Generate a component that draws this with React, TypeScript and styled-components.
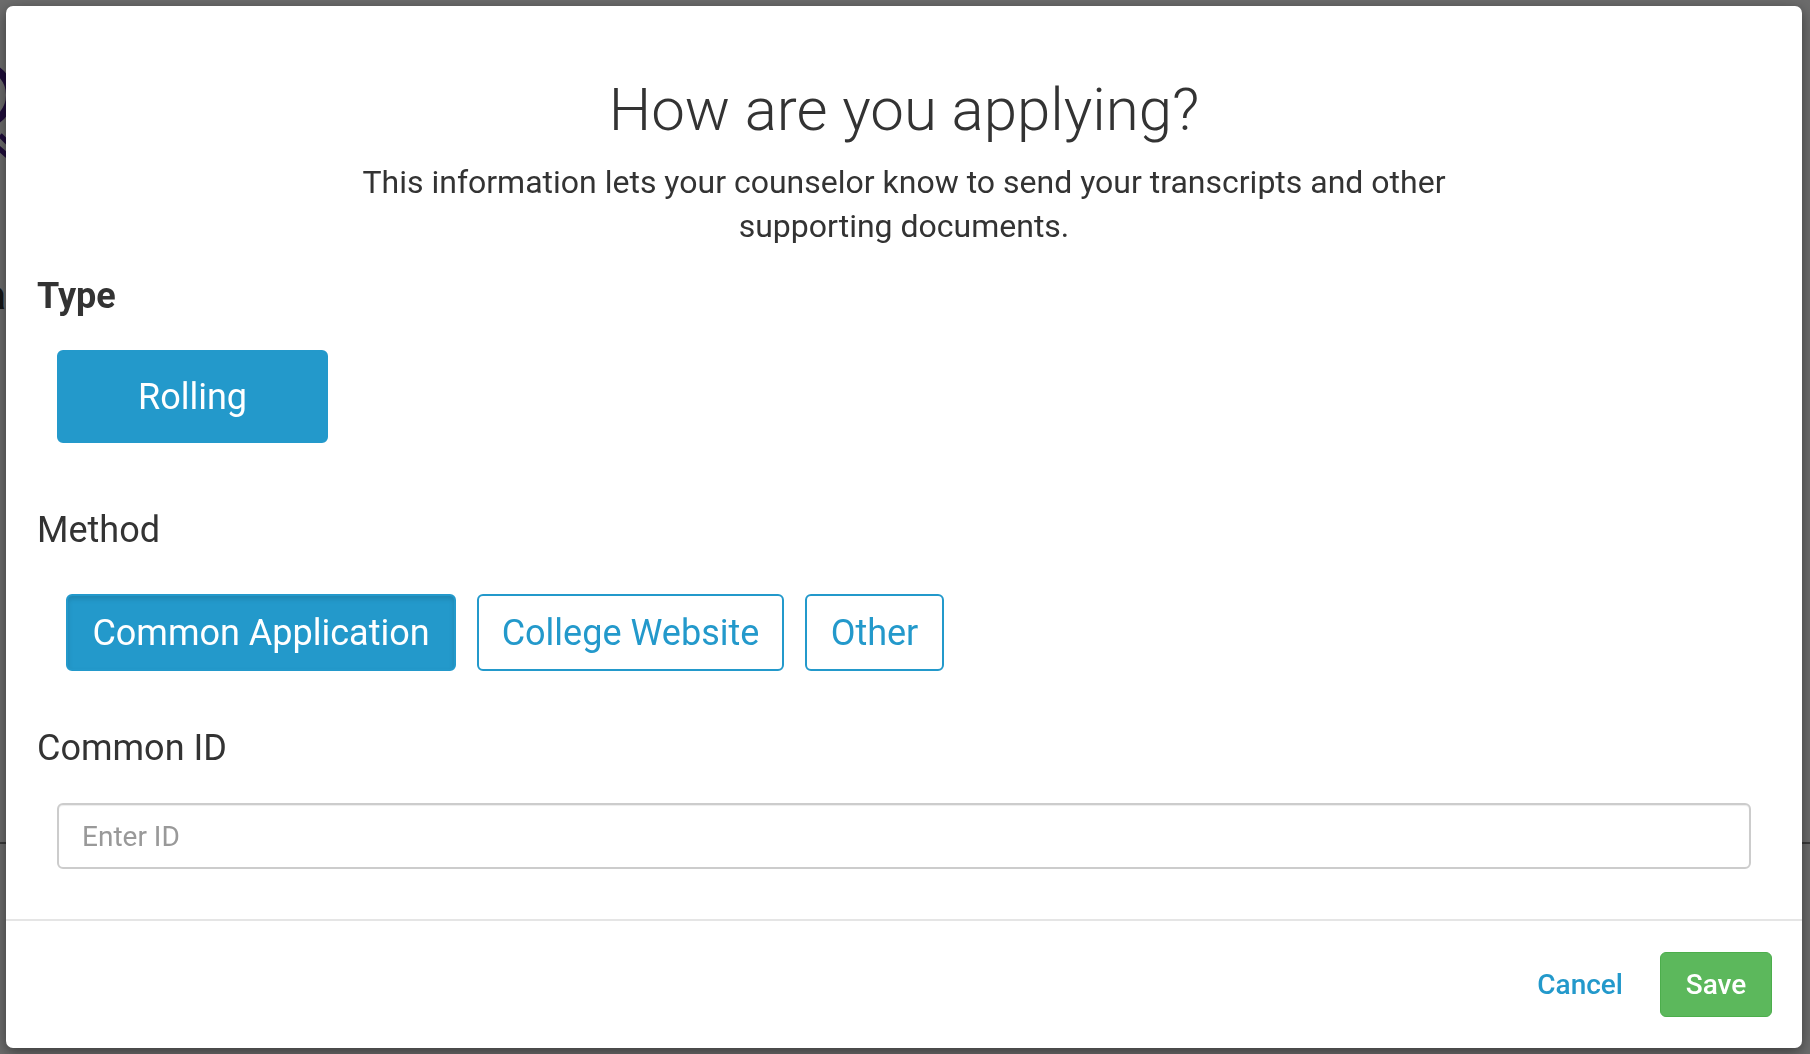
import React from "react";
import styled, { createGlobalStyle } from "styled-components";

const GlobalStyle = createGlobalStyle`
  html, body { margin: 0; padding: 0; height: 100%; }
  body {
    font-family: Roboto, "Noto Sans", "Liberation Sans", sans-serif;
    color: #333;
    background: #fff;
    overflow: hidden;
  }
  * { box-sizing: border-box; }
`;

const BLUE = "#2399cb";

const Page = styled.div`
  position: relative;
  width: 1810px;
  height: 1054px;
  background: #fff;
`;

const PageLogo = styled.svg`
  position: absolute;
  left: -60px;
  top: 50px;
`;

const PageText = styled.span`
  position: absolute;
  left: -16px;
  top: 272px;
  font-size: 40px;
  font-weight: 700;
  color: #333;
`;

const PageRule = styled.div`
  position: absolute;
  left: 0;
  right: 0;
  top: 842px;
  height: 2px;
  background: #888;
`;

const Overlay = styled.div`
  position: fixed;
  inset: 0;
  background: rgba(0, 0, 0, 0.58);
  display: flex;
  padding: 6px 8px 6px 6px;
`;

const Modal = styled.div`
  flex: 1;
  background: #fff;
  border-radius: 7px;
  box-shadow: 0 4px 14px rgba(0, 0, 0, 0.45);
  display: flex;
  flex-direction: column;
`;

const Body = styled.div`
  flex: 1;
  padding: 71px 31px 0 31px;
  display: flex;
  flex-direction: column;
`;

const Title = styled.h1`
  margin: 0;
  text-align: center;
  font-size: 60px;
  line-height: 66px;
  font-weight: 300;
  color: #333;
`;

const Subtitle = styled.p`
  margin: 17px auto 0;
  max-width: 1200px;
  text-align: center;
  font-size: 32px;
  line-height: 44px;
  font-weight: 400;
  color: #333;
`;

const Label = styled.div<{ $bold?: boolean; $gap: number }>`
  margin-top: ${(p) => p.$gap}px;
  font-size: 36px;
  line-height: 40px;
  font-weight: ${(p) => (p.$bold ? 700 : 400)};
  color: #333;
`;

const ButtonRow = styled.div<{ $gap: number; $indent: number }>`
  margin-top: ${(p) => p.$gap}px;
  padding-left: ${(p) => p.$indent}px;
  display: flex;
  gap: 21px;
`;

const Choice = styled.button<{ $active?: boolean; $h: number; $w: number }>`
  height: ${(p) => p.$h}px;
  width: ${(p) => p.$w}px;
  padding: 0;
  border: 2px solid ${BLUE};
  border-radius: 6px;
  background: ${(p) => (p.$active ? BLUE : "#fff")};
  color: ${(p) => (p.$active ? "#fff" : BLUE)};
  font-family: inherit;
  font-size: 36px;
  font-weight: 400;
  cursor: pointer;
`;

const ActiveChoice = styled(Choice)`
  box-shadow: inset 0 3px 5px rgba(0, 0, 0, 0.125);
`;

const Input = styled.input`
  margin: 35px 20px 0 20px;
  height: 66px;
  border: 2px solid #ccc;
  border-radius: 6px;
  padding: 0 23px;
  font-family: inherit;
  font-size: 28px;
  color: #555;
  box-shadow: inset 0 1px 1px rgba(0, 0, 0, 0.075);
  outline: none;
  &::placeholder { color: #999; }
`;

const Footer = styled.div`
  border-top: 2px solid #e5e5e5;
  padding: 31px 30px 31px 0;
  display: flex;
  justify-content: flex-end;
  align-items: center;
  gap: 37px;
`;

const LinkButton = styled.button`
  border: none;
  background: none;
  padding: 0;
  color: ${BLUE};
  font-family: inherit;
  font-size: 28px;
  font-weight: 500;
  cursor: pointer;
`;

const SaveButton = styled.button`
  width: 112px;
  height: 65px;
  border: 1px solid #4cae4c;
  border-radius: 6px;
  background: #5cb85c;
  color: #fff;
  font-family: inherit;
  font-size: 28px;
  font-weight: 500;
  cursor: pointer;
`;

export default function App() {
  return (
    <>
      <GlobalStyle />
      <Page>
        <PageLogo width="80" height="110" viewBox="0 0 80 110">
          <circle cx="40" cy="45" r="30" fill="none" stroke="#4a1f8a" strokeWidth="8" />
          <path d="M60 85 L75 100 M55 95 L70 108" stroke="#4a1f8a" strokeWidth="5" />
        </PageLogo>
        <PageText>a</PageText>
        <PageRule />
      </Page>
      <Overlay>
        <Modal>
          <Body>
            <Title>How are you applying?</Title>
            <Subtitle>
              This information lets your counselor know to send your transcripts and other
              supporting documents.
            </Subtitle>
            <Label $bold $gap={28}>Type</Label>
            <ButtonRow $gap={34} $indent={20}>
              <Choice $active $h={93} $w={271}>Rolling</Choice>
            </ButtonRow>
            <Label $gap={67}>Method</Label>
            <ButtonRow $gap={44} $indent={29}>
              <ActiveChoice $active $h={77} $w={390}>Common Application</ActiveChoice>
              <Choice $h={77} $w={307}>College Website</Choice>
              <Choice $h={77} $w={139}>Other</Choice>
            </ButtonRow>
            <Label $gap={57}>Common ID</Label>
            <Input placeholder="Enter ID" />
          </Body>
          <Footer>
            <LinkButton>Cancel</LinkButton>
            <SaveButton>Save</SaveButton>
          </Footer>
        </Modal>
      </Overlay>
    </>
  );
}
